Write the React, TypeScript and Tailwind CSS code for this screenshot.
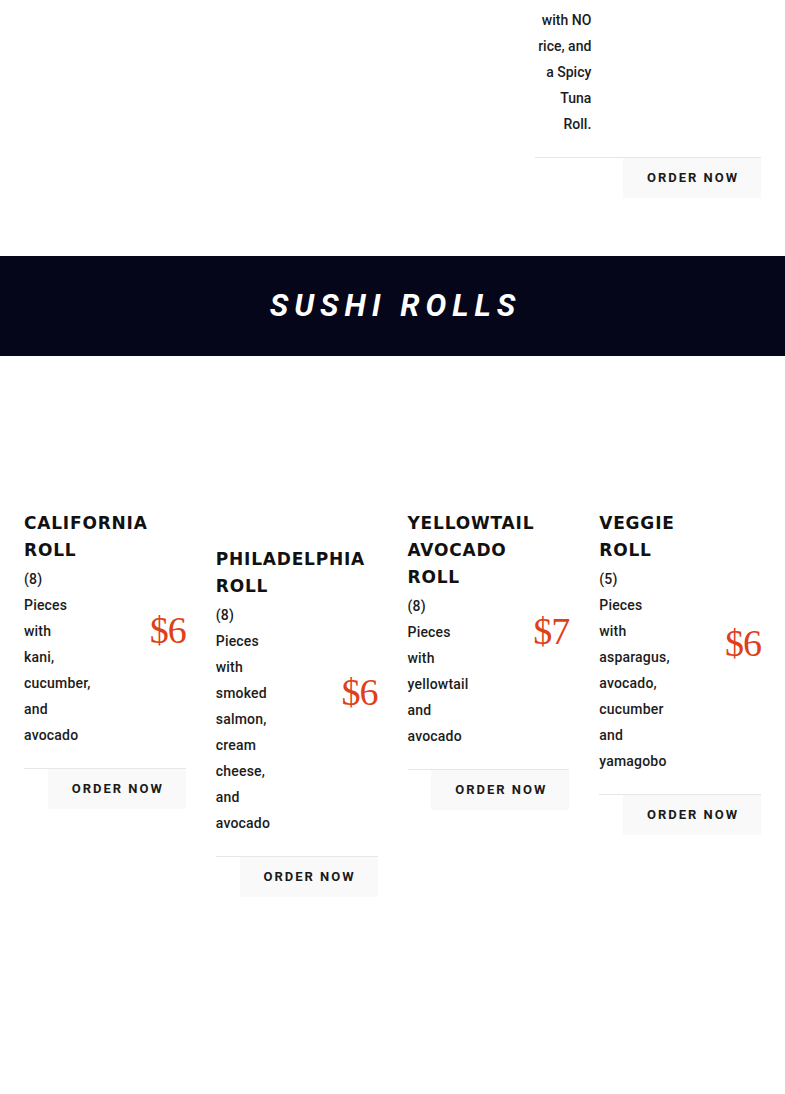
import React from "react";

type Roll = {
  name: string[];
  lines: string[];
  price: string;
  offset?: string;
  priceGap: string;
};

const rolls: Roll[] = [
  {
    name: ["CALIFORNIA", "ROLL"],
    lines: ["(8)", "Pieces", "with", "kani,", "cucumber,", "and", "avocado"],
    price: "$6",
    priceGap: "mb-[54px]",
  },
  {
    name: ["PHILADELPHIA", "ROLL"],
    lines: ["(8)", "Pieces", "with", "smoked", "salmon,", "cream", "cheese,", "and", "avocado"],
    price: "$6",
    offset: "pt-[36px]",
    priceGap: "mb-[54px]",
  },
  {
    name: ["YELLOWTAIL", "AVOCADO", "ROLL"],
    lines: ["(8)", "Pieces", "with", "yellowtail", "and", "avocado"],
    price: "$7",
    priceGap: "mb-[80px]",
  },
  {
    name: ["VEGGIE", "ROLL"],
    lines: ["(5)", "Pieces", "with", "asparagus,", "avocado,", "cucumber", "and", "yamagobo"],
    price: "$6",
    priceGap: "mb-[54px]",
  },
];

function OrderButton() {
  return (
    <div className="border-t border-[#e6e6e6] flex justify-end">
      <button className="w-[138px] h-10 bg-[#f9f9f9] text-[13px] font-bold tracking-[2px] pl-[2px] text-[#1a1a1a] font-['Roboto',sans-serif]">
        ORDER NOW
      </button>
    </div>
  );
}

function RollCard({ roll }: { roll: Roll }) {
  return (
    <div className={roll.offset ?? ""}>
      <h3 className="font-['DejaVu_Sans',sans-serif] font-bold text-[17px] leading-[27px] tracking-[0.8px] text-[#111] pt-[2px]">
        {roll.name.map((n) => (
          <div key={n}>{n}</div>
        ))}
      </h3>
      <div className="flex items-center justify-between mt-[2px] pb-5">
        <p className="text-[14px] leading-[26px] font-medium text-[#1c1c1c] font-['Roboto',sans-serif] tracking-[0.2px]">
          {roll.lines.map((l, i) => (
            <span key={i} className="block">
              {l}
            </span>
          ))}
        </p>
        <span className={`${roll.priceGap} font-['Liberation_Serif',serif] text-[38px] leading-none text-[#de4119] tracking-[-1px]`}>
          {roll.price}
        </span>
      </div>
      <OrderButton />
    </div>
  );
}

export default function App() {
  return (
    <main className="min-h-[1094px] bg-white">
      {/* tail of previous section */}
      <section className="px-6 pb-[58px]">
        <div className="grid grid-cols-3 gap-[30px]">
          <div />
          <div />
          <div className="pt-[7px]">
            <p className="w-[56px] text-right text-[14px] leading-[26px] font-medium text-[#1c1c1c] font-['Roboto',sans-serif] pb-5">
              <span className="block">with NO</span>
              <span className="block">rice, and</span>
              <span className="block">a Spicy</span>
              <span className="block">Tuna</span>
              <span className="block">Roll.</span>
            </p>
            <OrderButton />
          </div>
        </div>
      </section>

      {/* Sushi rolls banner */}
      <section className="h-[100px] bg-[#05061a] flex items-center justify-center">
        <h2 className="font-['Roboto',sans-serif] italic font-bold text-[31px] tracking-[6px] text-white pl-[6px]">
          SUSHI ROLLS
        </h2>
      </section>

      <section className="px-6 pt-[152px] pb-20">
        <div className="grid grid-cols-4 gap-[30px] items-start">
          {rolls.map((r) => (
            <RollCard key={r.name.join(" ")} roll={r} />
          ))}
        </div>
      </section>
    </main>
  );
}
